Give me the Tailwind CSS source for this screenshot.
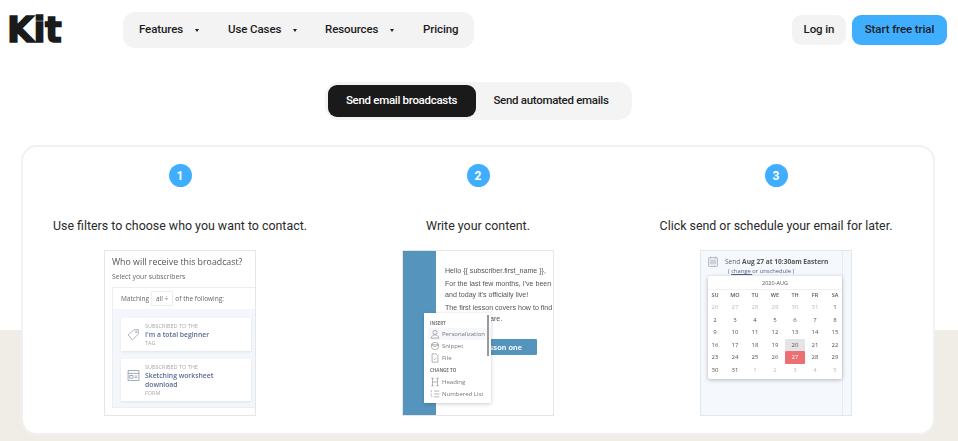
<!DOCTYPE html>
<html>
<head>
<meta charset="utf-8">
<script src="https://cdn.jsdelivr.net/npm/@tailwindcss/browser@4"></script>
</head>
<body class="bg-white">
<div class="w-[958px] h-[441px] overflow-hidden font-['Roboto',sans-serif] text-[#1c1c1c] bg-[linear-gradient(#fff_330px,#f0ede6_330px)]">

    <!-- Header -->
    <header class="flex items-start h-[82px] pl-[7px] pr-[11px] pt-[12px]">
        <div class="w-[116px] h-[36px] flex items-center">
            <span class="font-['DejaVu_Sans',sans-serif] font-bold text-[35px] leading-none tracking-[-0.5px] text-[#1a1a1a] [-webkit-text-stroke:1.5px_#1a1a1a]">Kit</span>
        </div>
        <nav class="w-[351px] h-[36px] bg-[#f3f3f3] rounded-[12px] flex items-center pl-[16px] text-[11.5px] tracking-[-0.1px] font-medium">
            <span class="w-[89px] flex items-center">Features<span class="ml-[12px] border-x-[2px] border-t-[3px] border-x-transparent border-t-[#1c1c1c]"></span></span>
            <span class="w-[97px] flex items-center">Use Cases<span class="ml-[12px] border-x-[2px] border-t-[3px] border-x-transparent border-t-[#1c1c1c]"></span></span>
            <span class="w-[98px] flex items-center">Resources<span class="ml-[12px] border-x-[2px] border-t-[3px] border-x-transparent border-t-[#1c1c1c]"></span></span>
            <span>Pricing</span>
        </nav>
        <div class="ml-auto flex items-center gap-[6px] pt-[3px]">
            <span class="w-[54px] h-[30px] rounded-[9px] bg-[#f3f3f3] flex items-center justify-center text-[11.5px] tracking-[-0.1px] font-medium">Log in</span>
            <span class="w-[95px] h-[30px] rounded-[9px] bg-[#40aeff] flex items-center justify-center text-[11.5px] tracking-[-0.1px] font-medium">Start free trial</span>
        </div>
    </header>

    <!-- Tabs -->
    <div class="flex justify-center">
        <div class="w-[307px] h-[38px] ml-[-2px] bg-[#f4f4f4] rounded-[14px] flex items-center p-[3px] text-[11.5px] tracking-[-0.3px] font-medium">
            <span class="w-[148px] h-[32px] rounded-[9px] bg-[#1a1a1a] text-white flex items-center justify-center">Send email broadcasts</span>
            <span class="flex-1 flex items-center justify-center pr-[2px]">Send automated emails</span>
        </div>
    </div>

    <!-- Steps card -->
    <section class="mt-[25px] ml-[21px] w-[914px] h-[290px] bg-white border-2 border-[#f1f1f1] rounded-[16px] grid grid-cols-[298px_298px_298px] pl-[8px] pt-[17px]">

        <!-- Step 1 -->
        <div class="flex flex-col items-center">
            <div class="w-[23px] h-[23px] rounded-full bg-[#40aeff] text-white text-[12px] font-bold flex items-center justify-center">1</div>
            <p class="mt-[31px] h-[32px] text-[12.4px] leading-[16px] text-[#2a2a2a] whitespace-nowrap">Use filters to choose who you want to contact.</p>
            <div class="w-[152px] h-[166px] border border-[#e6e6e6] font-['Open_Sans',sans-serif] text-[#666] pl-[7px] pt-[5px] overflow-hidden blur-[0.3px]">
                <p class="text-[8.8px] leading-[13px] text-[#555] whitespace-nowrap">Who will receive this broadcast?</p>
                <p class="text-[6.8px] leading-[9px] mt-[3px] whitespace-nowrap">Select your subscribers</p>
                <div class="mt-[6px] h-[121px] border border-r-0 border-[#eeeeee]">
                    <div class="h-[21px] flex items-center pl-[8px] text-[6.5px] whitespace-nowrap">Matching <span class="mx-[2px] px-[4px] py-[2px] border border-[#eeeeee]">all ÷</span> of the following:</div>
                    <div class="h-[98px] bg-[#f3f7fb] pl-[8px] pt-[9px] flex flex-col gap-[8px]">
                        <div class="w-[130px] h-[33px] bg-white shadow-[0_1px_2px_#dde3ea] flex items-center pl-[6px] gap-[5px]">
                            <svg class="w-[13px] h-[13px] text-[#9aa5b1]" viewBox="0 0 24 24" fill="none" stroke="currentColor" stroke-width="1.5"><path d="M2 13 13 3h8v8L10 22z"/><circle cx="17" cy="7" r="1.5"/></svg>
                            <div class="leading-none whitespace-nowrap">
                                <p class="text-[5.5px] leading-[7px] text-[#aaa]">SUBSCRIBED TO THE</p>
                                <p class="text-[6.8px] leading-[10px] font-semibold text-[#5a6a92]">I'm a total beginner</p>
                                <p class="text-[5.5px] leading-[7px] text-[#aaa]">TAG</p>
                            </div>
                        </div>
                        <div class="w-[130px] h-[42px] bg-white shadow-[0_1px_2px_#dde3ea] flex items-center pl-[6px] gap-[5px]">
                            <svg class="w-[13px] h-[13px] mb-[10px] text-[#8d99a8]" viewBox="0 0 24 24" fill="none" stroke="currentColor" stroke-width="1.5"><rect x="2" y="3" width="20" height="18"/><path d="M2 8h20M5 12h6v5H5zM14 13h5M14 16h5"/></svg>
                            <div class="whitespace-nowrap">
                                <p class="text-[5.5px] leading-[7px] text-[#aaa]">SUBSCRIBED TO THE</p>
                                <p class="text-[6.8px] leading-[9px] font-semibold text-[#5a6a92]">Sketching worksheet<br>download</p>
                                <p class="text-[5.5px] leading-[8px] text-[#aaa]">FORM</p>
                            </div>
                        </div>
                    </div>
                </div>
            </div>
        </div>

        <!-- Step 2 -->
        <div class="flex flex-col items-center">
            <div class="w-[23px] h-[23px] rounded-full bg-[#40aeff] text-white text-[12px] font-bold flex items-center justify-center">2</div>
            <p class="mt-[31px] h-[32px] text-[12.4px] leading-[16px] text-[#2a2a2a] whitespace-nowrap">Write your content.</p>
            <div class="relative w-[152px] h-[166px] border border-[#e6e6e6] flex overflow-hidden font-['Liberation_Sans',sans-serif] text-[#555] blur-[0.3px]">
                <div class="w-[33px] shrink-0 bg-[#5595bd]"></div>
                <div class="pl-[9px] pt-[15px] text-[7.1px] leading-[11px] whitespace-nowrap">
                    <p>Hello {{ subscriber.first_name }},</p>
                    <p class="mt-[2px]">For the last few months, I've been working<br>and today it's officially live!</p>
                    <p class="mt-[2px]">The first lesson covers how to find<br><span class="ml-[45px]">are.</span></p>
                    <div class="mt-[14px] ml-[-20px] w-[112px] h-[16px] bg-[#5595bd] rounded-[1px] text-white font-bold text-[7.5px] flex items-center justify-center pl-[40px]">Lesson one</div>
                </div>
                <!-- Insert menu -->
                <div class="absolute left-[21px] top-[62px] w-[67px] h-[90px] bg-white shadow-[0_1px_4px_#0003] pl-[6px] pt-[6px] font-['Open_Sans',sans-serif] text-[6px] text-[#777]">
                    <p class="text-[4.5px] leading-[8px] font-bold text-[#777]">INSERT</p>
                    <div class="flex flex-col">
                        <p class="h-[12px] mt-[1px] ml-[-2px] bg-[#f5f7fa] flex items-center gap-[2px] pl-[2px]"><svg class="w-[10px] h-[10px]" viewBox="0 0 24 24" fill="none" stroke="#888" stroke-width="1.5"><circle cx="12" cy="8" r="5"/><path d="M3 22c1-6 5-8 9-8s8 2 9 8z"/></svg>Personalization</p>
                        <p class="h-[12px] ml-[-2px] flex items-center gap-[2px] pl-[2px]"><svg class="w-[10px] h-[10px]" viewBox="0 0 24 24" fill="none" stroke="#888" stroke-width="1.5"><circle cx="12" cy="12" r="9"/><path d="M4 9h16l-8 5z"/></svg>Snippet</p>
                        <p class="h-[12px] ml-[-2px] flex items-center gap-[2px] pl-[2px]"><svg class="w-[10px] h-[10px]" viewBox="0 0 24 24" fill="none" stroke="#888" stroke-width="1.5"><path d="M5 2h9l5 5v15H5zM9 14l2 2 4-4"/></svg>File</p>
                    </div>
                    <p class="text-[4.5px] leading-[8px] font-bold text-[#777] mt-[2px]">CHANGE TO</p>
                    <div class="flex flex-col">
                        <p class="h-[12px] mt-[2px] ml-[-2px] flex items-center gap-[2px] pl-[2px]"><svg class="w-[10px] h-[10px]" viewBox="0 0 24 24" fill="none" stroke="#888" stroke-width="1.5"><path d="M6 3v18M18 3v18M6 12h12M3 3h6M15 3h6M3 21h6M15 21h6"/></svg>Heading</p>
                        <p class="h-[12px] ml-[-2px] flex items-center gap-[2px] pl-[2px]"><svg class="w-[10px] h-[10px]" viewBox="0 0 24 24" fill="none" stroke="#888" stroke-width="1.5"><path d="M10 5h12M10 12h12M10 19h12M3 3v5M3 11v5M3 19h3"/></svg>Numbered List</p>
                    </div>
                    <div class="absolute right-[2px] top-[2px] w-[2px] h-[41px] bg-[#9a9a9a]"></div>
                </div>
            </div>
        </div>

        <!-- Step 3 -->
        <div class="flex flex-col items-center">
            <div class="w-[23px] h-[23px] rounded-full bg-[#40aeff] text-white text-[12px] font-bold flex items-center justify-center">3</div>
            <p class="mt-[31px] h-[32px] text-[12.4px] leading-[16px] text-[#2a2a2a] whitespace-nowrap">Click send or schedule your email for later.</p>
            <div class="relative w-[152px] h-[166px] border border-[#e3e6ea] bg-[#f5f8fc] font-['Open_Sans',sans-serif] text-[#666] blur-[0.3px]">
                <div class="absolute right-[8px] top-0 bottom-0 w-px bg-[#e6ebf0]"></div>
                <div class="flex pl-[7px] pt-[6px] gap-[7px]">
                    <svg class="w-[10px] h-[11px] mt-[-1px] text-[#aab]" viewBox="0 0 20 22" fill="#e9e9ee" stroke="currentColor" stroke-width="1.5"><rect x="1" y="3" width="18" height="18" rx="2"/><path d="M5 1v4M15 1v4M4 10h12M4 14h12" /></svg>
                    <div class="whitespace-nowrap">
                        <p class="text-[6.6px] leading-[10px]">Send <b class="text-[#555]">Aug 27 at 10:30am Eastern</b></p>
                        <p class="text-[5.8px] leading-[8px] ml-[3px]">( <span class="underline text-[#52618a]">change </span>or <span class="text-[#52618a]">unschedule</span> )</p>
                    </div>
                </div>
                <!-- Calendar popup -->
                <div class="absolute left-[7px] top-[25px] w-[134px] h-[103px] bg-white rounded-[2px] shadow-[0_1px_4px_#0004] text-[6px] text-[#555]">
                    <p class="h-[14px] pt-[2px] flex items-center justify-center text-[5.5px] border-b border-[#f0f0f0]">2020-AUG</p>
                    <div class="grid grid-cols-[repeat(7,20px)] ml-[-3px] text-center leading-[12.5px]">
                        <span class="text-[5.5px] leading-[11px] font-semibold">SU</span><span class="text-[5.5px] leading-[11px] font-semibold">MO</span><span class="text-[5.5px] leading-[11px] font-semibold">TU</span><span class="text-[5.5px] leading-[11px] font-semibold">WE</span><span class="text-[5.5px] leading-[11px] font-semibold">TH</span><span class="text-[5.5px] leading-[11px] font-semibold">FR</span><span class="text-[5.5px] leading-[11px] font-semibold">SA</span>
                        <span class="text-[#bbb]">26</span><span class="text-[#bbb]">27</span><span class="text-[#bbb]">28</span><span class="text-[#bbb]">29</span><span class="text-[#bbb]">30</span><span class="text-[#bbb]">31</span><span>1</span>
                        <span>2</span><span>3</span><span>4</span><span>5</span><span>6</span><span>7</span><span>8</span>
                        <span>9</span><span>10</span><span>11</span><span>12</span><span>13</span><span>14</span><span>15</span>
                        <span>16</span><span>17</span><span>18</span><span>19</span><span class="bg-[#e4e4e4] rounded-[1px]">20</span><span>21</span><span>22</span>
                        <span>23</span><span>24</span><span>25</span><span>26</span><span class="bg-[#ec6f72] text-white rounded-[1px]">27</span><span>28</span><span>29</span>
                        <span>30</span><span>31</span><span class="text-[#bbb]">1</span><span class="text-[#bbb]">2</span><span class="text-[#bbb]">3</span><span class="text-[#bbb]">4</span><span class="text-[#bbb]">5</span>
                    </div>
                </div>
            </div>
        </div>
    </section>
</div>
</body>
</html>
